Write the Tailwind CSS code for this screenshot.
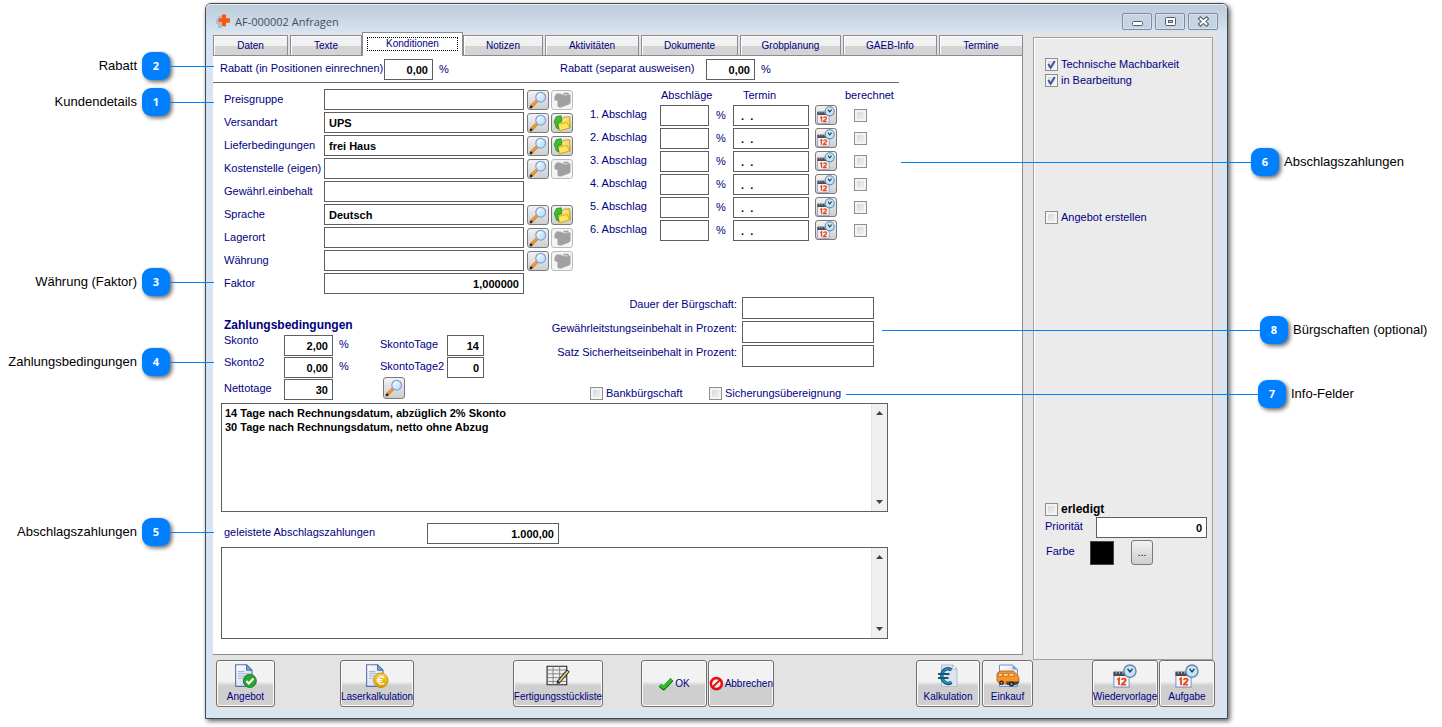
<!DOCTYPE html>
<html lang="de">
<head>
<meta charset="utf-8">
<title>AF-000002 Anfragen</title>
<script src="https://cdn.jsdelivr.net/npm/@tailwindcss/browser@4"></script>
</head>
<body class="relative min-h-screen bg-white font-['Liberation_Sans',Arial,sans-serif] text-[11px] text-[#000080]">

<svg class="absolute h-0 w-0" aria-hidden="true">
  <defs>
    <linearGradient id="gold" x1="0" y1="0" x2="0" y2="1"><stop offset="0" stop-color="#ffd84a"/><stop offset="1" stop-color="#d99a00"/></linearGradient>
    <linearGradient id="folder" x1="0" y1="0" x2="1" y2="1"><stop offset="0" stop-color="#fff7a8"/><stop offset="1" stop-color="#f0c11a"/></linearGradient>
    <linearGradient id="paper" x1="0" y1="0" x2="1" y2="1"><stop offset="0" stop-color="#ffffff"/><stop offset="1" stop-color="#c5d3ee"/></linearGradient>
    <linearGradient id="lens" x1="0" y1="0" x2="1" y2="1"><stop offset="0" stop-color="#f4fbff"/><stop offset="1" stop-color="#a9dcf8"/></linearGradient>
  </defs>
  <symbol id="search" viewBox="0 0 18 18">
    <path d="M2.2 15.600 8 9.800" stroke="#a8641c" stroke-width="3" stroke-linecap="round"/>
    <path d="M2.400 15.200 7.800 9.800" stroke="#f9a12c" stroke-width="2" stroke-linecap="round"/>
    <path d="M1.700 16.300 2.400 15.600" stroke="#222" stroke-width="2.200" stroke-linecap="round"/>
    <circle cx="11.700" cy="6.200" r="4.900" fill="url(#lens)" stroke="#8ba0d6" stroke-width="1.300"/>
    <path d="M9 6a3 3 0 0 1 2.600-2.600" stroke="#fff" stroke-width="1.300" fill="none"/>
  </symbol>
  <symbol id="open" viewBox="0 0 18 18">
    <path d="M6 6 9.500 5l1-1.800 6.300-.4.400 11L6 16.500z" fill="url(#folder)" stroke="#b48a10" stroke-width=".8"/>
    <path d="M4.500 10.500 13.800 8.500 16.800 14 6.500 16.800z" fill="#ffe45c" stroke="#c49a16" stroke-width=".7"/>
    <path d="M8.200 1.800 3.400 2.500 1.200 7.500 3.400 14 6 15 4.500 8.500 8.800 8z" fill="#3fbf30" stroke="#1c8518" stroke-width=".7"/>
  </symbol>
  <symbol id="open-off" viewBox="0 0 18 18">
    <path d="M3.500 2.500H7.500L8.500 3.500H10.500V1.800H15.500V3.500H17.500V12L16 13.500L8 16.500H6L4.500 15V10L1.500 9V5.500Z" fill="#a0a0a0"/>
    <path d="M10.500 3.800h4" stroke="#f2f2f2" stroke-width=".8"/>
  </symbol>
  <symbol id="calendar" viewBox="0 0 22 22">
    <path d="M.8 7.500h14v13.700h-14z" fill="#f4f6fd" stroke="#8c96c4"/>
    <path d="M.5 7h14.500v4H.5z" fill="#4a4a55"/>
    <path d="M3 6v3M6 6v3M9 6v3M12 6v3" stroke="#bbb" stroke-width=".9"/>
    <path d="M4 14.500 5.500 13.300v6M8 14.500c.3-1.600 4-1.600 3.600.4-.2 1.300-3 2.500-3.600 4h4" stroke="#ee4b12" stroke-width="1.700" fill="none"/>
    <circle cx="15.500" cy="6.500" r="5.600" fill="#bfe7f8" stroke="#6b86a8" stroke-width="1.300"/>
    <path d="M13.400 4.500 15.600 7.300 17.800 4.500" stroke="#23344e" stroke-width="1.300" fill="none"/>
  </symbol>
  <symbol id="doc-ok" viewBox="0 0 22 22">
    <path d="M1.500.7h10l5 5v14.800h-15z" fill="url(#paper)" stroke="#5470a8"/>
    <path d="M11.500.7v5h5z" fill="#7fa3da" stroke="#42639c" stroke-width=".8"/>
    <path d="M3.500 7h6M3.500 9h11M3.500 11h11M3.500 13h6" stroke="#aab6cc"/>
    <circle cx="14.500" cy="15.500" r="6" fill="#2da334" stroke="#147a1c" stroke-width=".8"/>
    <path d="m11.400 15.600 2.200 2.300 4.200-4.500" stroke="#fff" stroke-width="2" fill="none"/>
  </symbol>
  <symbol id="doc-euro" viewBox="0 0 22 22">
    <path d="M1.500.7h10l5 5v14.800h-15z" fill="url(#paper)" stroke="#5470a8"/>
    <path d="M11.500.7v5h5z" fill="#7fa3da" stroke="#42639c" stroke-width=".8"/>
    <path d="M3.500 7h6M3.500 9h11M3.500 11h6M3.500 13h4" stroke="#aab6cc"/>
    <circle cx="14.500" cy="15" r="6.600" fill="url(#gold)" stroke="#c88c00" stroke-width=".8"/>
    <path d="M17.500 12.300c-3.600-1.800-5.600.4-5.500 2.800.1 2.500 2.300 4.300 5.500 2.600M10.600 14.300h5M10.600 16h5" stroke="#fff" stroke-width="1.200" fill="none"/>
  </symbol>
  <symbol id="sheet" viewBox="0 0 22 22">
    <path d="M1 2h18v17H1z" fill="#f0f0f0" stroke="#222"/>
    <path d="M1 5.500h18M1 9h18M1 12.500h18M1 16h18M6.500 2v17M12.500 2v17" stroke="#777" stroke-width=".8"/>
    <path d="M11 17 20.500 6" stroke="#333" stroke-width="3.400"/>
    <path d="M12 16 20 6.600" stroke="#e6dc6a" stroke-width="1.600"/>
    <path d="m9.500 18.500 1-3 2 1.700z" fill="#222"/>
  </symbol>
  <symbol id="tick" viewBox="0 0 16 14">
    <path d="M2 8.300 5.600 11.300 14 2.500" stroke="#0b6b0f" stroke-width="4" fill="none" stroke-linejoin="round"/>
    <path d="M2.200 8 5.600 10.700 13.600 2.500" stroke="#2fc02c" stroke-width="2.800" fill="none" stroke-linejoin="round"/>
  </symbol>
  <symbol id="forbid" viewBox="0 0 16 16">
    <circle cx="8.500" cy="8.600" r="6" fill="none" stroke="#999" stroke-width="2.600"/>
    <circle cx="8" cy="8" r="6" fill="#ffffff80" stroke="#f00808" stroke-width="2.600"/>
    <path d="m4 12 8-8" stroke="#f00808" stroke-width="2.200"/>
  </symbol>
  <symbol id="euro" viewBox="0 0 22 24">
    <path d="M4.500 1h11l4.500 4v17.500h-15.500z" fill="#dfe3ee" stroke="#b4bccd"/>
    <path d="M15.500 1v4h4.500z" fill="#fff" stroke="#a4aec2" stroke-width=".7"/>
    <path d="M14.500 5.800C8.600 2.600 4.800 7 4.800 12s4.200 9.400 9.800 6.400" stroke="#135a78" stroke-width="3.400" fill="none"/>
    <path d="M14.500 5.500C9 3 5 7 5 12s4 8.800 9.600 6" stroke="#2b93b5" stroke-width="1.400" fill="none"/>
    <path d="M1 10h11.500M1 14h10.500" stroke="#135a78" stroke-width="2"/>
  </symbol>
  <symbol id="van" viewBox="0 0 24 24">
    <path d="M3.500 1h13l5 4.500v17h-18z" fill="url(#paper)" stroke="#7590c8"/>
    <path d="M16.500 1v4.500h5z" fill="#7fa3da"/>
    <path d="M1 9.500 4 7h13l4.500 4 1.500 3v4l-3 2H4l-3-3z" fill="#fb9420" stroke="#b85c08" stroke-width=".8"/>
    <path d="M2.500 9.500h4V12h-4zM7.500 9.500h4.500V12H7.500zM13 9.500h3.700l2.300 2.500H13z" fill="#ffe5b8" stroke="#9c5a18" stroke-width=".6"/>
    <path d="M10 17.500h13v1.500l-3 2h-9z" fill="#444"/>
    <circle cx="5.500" cy="18.800" r="2.300" fill="#222"/><circle cx="15.500" cy="20" r="2.500" fill="#222"/>
    <circle cx="5.500" cy="18.800" r=".9" fill="#bbb"/><circle cx="15.500" cy="20" r="1" fill="#bbb"/>
  </symbol>
  <symbol id="check" viewBox="0 0 13 13">
    <path d="m3.300 6 2.300 3.800L9.800 3" stroke="#42559a" stroke-width="2" fill="none"/>
  </symbol>
</svg>

<div class="flex min-h-screen pt-[3px] pr-[214px] pb-[8px] pl-[205px]">
  <main class="flex min-w-0 flex-1 flex-col rounded-t-[6px] border border-[#45484c] bg-[#d7e4f1] pr-[8px] pb-[7px] pl-[7px] shadow-[2px_2px_5px_rgba(0,0,0,0.65)]">

    <header class="-mr-[8px] -ml-[7px] flex h-[29px] items-start rounded-t-[5px] bg-linear-to-b from-[#bccad9] to-[#d7e4f1] pr-[9px] pl-[10px] shadow-[inset_0_1px_0_#e6edf4]">
      <svg class="mt-[9px] h-4 w-4" viewBox="0 0 16 16" aria-hidden="true"><path d="M2 3h4v3h4v5H6v4H2v-4H0V6h2z" fill="#b9bcc2"/><path d="M6 1.500h4V5l4 .5v4l-4 .5v3.500l-4-.5V9H2.500V5.500L6 5z" fill="#f05a1e"/></svg>
      <h1 class="mt-[10px] ml-[3px] flex-1 font-['Open_Sans',sans-serif] text-[11px] leading-4 text-[#454f5c]">AF-000002 Anfragen</h1>
      <div class="mt-[9px] flex gap-[3px] [&_button]:flex [&_button]:h-[17px] [&_button]:w-[30px] [&_button]:items-center [&_button]:justify-center [&_button]:rounded-[2px] [&_button]:border [&_button]:border-[#7d8ca3] [&_button]:bg-[#c6d3e2] [&_button]:shadow-[inset_0_0_0_1px_#d8e2ed]">
        <button aria-label="Minimieren"><svg class="h-[11px] w-[11px]" viewBox="0 0 11 11"><rect x=".5" y="5.500" width="10" height="4" rx="1" fill="#fff" stroke="#505a66"/></svg></button>
        <button aria-label="Maximieren"><svg class="h-[11px] w-[11px]" viewBox="0 0 11 11"><rect x=".5" y="1.500" width="10" height="8" rx="1" fill="#fff" stroke="#505a66"/><rect x="3.500" y="4.500" width="4" height="2" fill="#c6d3e2" stroke="#505a66"/></svg></button>
        <button aria-label="Schließen"><svg class="h-[11px] w-[11px]" viewBox="0 0 11 11"><path d="m1 1.500 9 8M10 1.500l-9 8" stroke="#505a66" stroke-width="4"/><path d="m1.800 2.200 7.400 6.600M9.200 2.200 1.800 8.800" stroke="#fff" stroke-width="2"/></svg></button>
      </div>
    </header>

    <div class="flex flex-1 flex-col bg-[#e3e3e3]">
      <div class="flex flex-1">

        <div class="flex min-w-0 flex-1 flex-col pb-[5px]">
          <div role="tablist" class="flex h-[23px] items-end gap-[2px] border-b border-[#8b8b95] text-[10px] [&_button]:h-[20px] [&_button]:border [&_button]:border-b-0 [&_button]:border-[#8b8b95] [&_button]:bg-linear-to-b [&_button]:from-[#f1f1f1] [&_button]:from-50% [&_button]:to-[#d4d4d4] [&_button]:to-55% [&_button]:shadow-[inset_1px_1px_0_#fff]">
            <button role="tab" class="w-[75px]">Daten</button>
            <button role="tab" class="w-[72px]">Texte</button>
            <div class="-mx-[2px] -mb-px flex h-[24px] w-[101px] border border-b-0 border-[#8b8b95] bg-white px-[4px] pt-[4px]">
              <span role="tab" aria-selected="true" tabindex="0" class="h-[14px] flex-1 border border-dotted border-black text-center leading-[12px]">Konditionen</span>
            </div>
            <button role="tab" class="w-[80px]">Notizen</button>
            <button role="tab" class="w-[94px]">Aktivitäten</button>
            <button role="tab" class="w-[97px]">Dokumente</button>
            <button role="tab" class="w-[101px]">Grobplanung</button>
            <button role="tab" class="w-[94px]">GAEB-Info</button>
            <button role="tab" class="flex-1">Termine</button>
          </div>

          <section class="flex-1 border-r border-b border-[#8b8b95] bg-white [&_input:not([type=checkbox])]:h-[21px] [&_input:not([type=checkbox])]:border [&_input:not([type=checkbox])]:border-[#5f5f5f] [&_input:not([type=checkbox])]:px-[4px] [&_input:not([type=checkbox])]:font-bold [&_input:not([type=checkbox])]:text-black [&_button]:flex [&_button]:h-[20px] [&_button]:w-[22px] [&_button]:items-center [&_button]:justify-center [&_button]:rounded-[3px] [&_button]:border [&_button]:border-[#7a7a7a] [&_button]:bg-linear-to-b [&_button]:from-[#f2f2f2] [&_button]:to-[#cecece] [&_button:disabled]:border-[#b8bcbf] [&_button:disabled]:bg-none [&_button:disabled]:bg-[#f4f4f4] [&_button_svg]:h-[18px] [&_button_svg]:w-[18px] [&_input[type=checkbox]]:h-[13px] [&_input[type=checkbox]]:w-[13px] [&_input[type=checkbox]]:appearance-none [&_input[type=checkbox]]:border [&_input[type=checkbox]]:border-[#8e8f8f] [&_input[type=checkbox]]:bg-linear-to-br [&_input[type=checkbox]]:from-[#cfd2d8] [&_input[type=checkbox]]:to-[#f6f6f6] [&_input[type=checkbox]]:shadow-[inset_0_0_0_2px_#f4f4f4]">

            <div class="flex h-[27px] w-[686px] items-start border-b border-[#6a6a6a] pt-[3px] pl-[7px]">
              <label for="rab1" class="w-[164px] leading-[18px]">Rabatt (in Positionen einrechnen)</label>
              <input id="rab1" value="0,00" class="w-[49px] text-right">
              <span class="w-[127px] pl-[6px] leading-[20px]">%</span>
              <label for="rab2" class="w-[146px] leading-[18px]">Rabatt (separat ausweisen)</label>
              <input id="rab2" value="0,00" class="w-[49px] text-right">
              <span class="pl-[6px] leading-[20px]">%</span>
            </div>

            <div class="flex pl-[11px]">
              <div class="flex w-[366px] flex-col gap-[2px] pt-[6px] [&>div]:flex [&>div]:items-center [&>div]:gap-[2px] [&_label]:w-[98px] [&_label]:whitespace-nowrap [&_input]:mr-px [&_input]:w-[200px] [&_input:not([type=checkbox])]:px-[3px]">
                <div><label for="f1">Preisgruppe</label><input id="f1"><button aria-label="Suchen"><svg><use href="#search"/></svg></button><button disabled aria-label="Öffnen"><svg><use href="#open-off"/></svg></button></div>
                <div><label for="f2">Versandart</label><input id="f2" value="UPS"><button aria-label="Suchen"><svg><use href="#search"/></svg></button><button aria-label="Öffnen"><svg><use href="#open"/></svg></button></div>
                <div><label for="f3">Lieferbedingungen</label><input id="f3" value="frei Haus"><button aria-label="Suchen"><svg><use href="#search"/></svg></button><button aria-label="Öffnen"><svg><use href="#open"/></svg></button></div>
                <div><label for="f4">Kostenstelle (eigen)</label><input id="f4"><button aria-label="Suchen"><svg><use href="#search"/></svg></button><button disabled aria-label="Öffnen"><svg><use href="#open-off"/></svg></button></div>
                <div><label for="f5">Gewährl.einbehalt</label><input id="f5"></div>
                <div><label for="f6">Sprache</label><input id="f6" value="Deutsch"><button aria-label="Suchen"><svg><use href="#search"/></svg></button><button aria-label="Öffnen"><svg><use href="#open"/></svg></button></div>
                <div><label for="f7">Lagerort</label><input id="f7"><button aria-label="Suchen"><svg><use href="#search"/></svg></button><button disabled aria-label="Öffnen"><svg><use href="#open-off"/></svg></button></div>
                <div><label for="f8">Währung</label><input id="f8"><button aria-label="Suchen"><svg><use href="#search"/></svg></button><button disabled aria-label="Öffnen"><svg><use href="#open-off"/></svg></button></div>
                <div><label for="f9">Faktor</label><input id="f9" value="1,000000" class="text-right"></div>
              </div>

              <div class="flex flex-col gap-[2px] pt-[4px] [&_label]:w-[70px] [&_label]:leading-[18px] [&>div+div]:flex [&>div+div]:h-[21px] [&_span.pct]:w-[24px] [&_span.pct]:text-center [&_span.pct]:leading-[20px] [&_button]:mr-[17px] [&_button]:ml-[6px] [&_input[type=checkbox]]:mt-[4px]">
                <div class="flex h-[16px] pl-[71px] leading-[16px]"><span class="w-[82px]">Abschläge</span><span class="w-[102px]">Termin</span><span>berechnet</span></div>
                <div><label for="a1">1. Abschlag</label><input id="a1" class="w-[49px]"><span class="pct">%</span><input aria-label="Termin 1" value=" .  ." class="w-[76px]"><button aria-label="Kalender"><svg><use href="#calendar"/></svg></button><input type="checkbox" aria-label="berechnet 1"></div>
                <div><label for="a2">2. Abschlag</label><input id="a2" class="w-[49px]"><span class="pct">%</span><input aria-label="Termin 2" value=" .  ." class="w-[76px]"><button aria-label="Kalender"><svg><use href="#calendar"/></svg></button><input type="checkbox" aria-label="berechnet 2"></div>
                <div><label for="a3">3. Abschlag</label><input id="a3" class="w-[49px]"><span class="pct">%</span><input aria-label="Termin 3" value=" .  ." class="w-[76px]"><button aria-label="Kalender"><svg><use href="#calendar"/></svg></button><input type="checkbox" aria-label="berechnet 3"></div>
                <div><label for="a4">4. Abschlag</label><input id="a4" class="w-[49px]"><span class="pct">%</span><input aria-label="Termin 4" value=" .  ." class="w-[76px]"><button aria-label="Kalender"><svg><use href="#calendar"/></svg></button><input type="checkbox" aria-label="berechnet 4"></div>
                <div><label for="a5">5. Abschlag</label><input id="a5" class="w-[49px]"><span class="pct">%</span><input aria-label="Termin 5" value=" .  ." class="w-[76px]"><button aria-label="Kalender"><svg><use href="#calendar"/></svg></button><input type="checkbox" aria-label="berechnet 5"></div>
                <div><label for="a6">6. Abschlag</label><input id="a6" class="w-[49px]"><span class="pct">%</span><input aria-label="Termin 6" value=" .  ." class="w-[76px]"><button aria-label="Kalender"><svg><use href="#calendar"/></svg></button><input type="checkbox" aria-label="berechnet 6"></div>
              </div>
            </div>

            <div class="flex pt-[3px] pb-[3px] pl-[11px]">
              <div class="w-[326px] pt-[20px]">
                <h2 class="h-[18px] text-[12px] leading-[16px] font-bold">Zahlungsbedingungen</h2>
                <div class="grid grid-cols-[60px_49px_47px_67px_37px] gap-y-px text-[11px] leading-[18px] [&>span]:pl-[6px] [&_input]:w-full [&_input]:text-right">
                  <label for="z1" class="leading-[10px]">Skonto</label><input id="z1" value="2,00"><span>%</span><label for="z2">SkontoTage</label><input id="z2" value="14">
                  <label for="z3" class="leading-[10px]">Skonto2</label><input id="z3" value="0,00"><span>%</span><label for="z4">SkontoTage2</label><input id="z4" value="0">
                  <label for="z5">Nettotage</label><input id="z5" value="30"><span></span><div class="h-[21px] pl-[3px] [&_button]:-mt-[2px] [&_button]:h-[22px]"><button aria-label="Zahlungsbedingung suchen"><svg><use href="#search"/></svg></button></div>
                </div>
              </div>
              <div class="flex flex-col gap-[2px] [&>div]:flex [&>div]:gap-[5px] [&_label.b]:w-[187px] [&_label.b]:text-right [&_label.b]:leading-[15px]">
                <div><label class="b" for="b1">Dauer der Bürgschaft:</label><input id="b1" class="h-[22px]! w-[132px]"></div>
                <div><label class="b" for="b2">Gewährleitstungseinbehalt in Prozent:</label><input id="b2" class="h-[22px]! w-[132px]"></div>
                <div><label class="b" for="b3">Satz Sicherheitseinbehalt in Prozent:</label><input id="b3" class="h-[22px]! w-[132px]"></div>
                <div class="mt-[18px] pl-[40px] leading-[13px]">
                  <label class="flex w-[114px] gap-[3px]"><input type="checkbox">Bankbürgschaft</label>
                  <label class="flex gap-[3px]"><input type="checkbox">Sicherungsübereignung</label>
                </div>
              </div>
            </div>

            <div class="ml-[8px] flex h-[109px] w-[667px] border border-[#5f5f5f]">
              <textarea aria-label="Zahlungstext" class="flex-1 resize-none overflow-hidden px-[3px] pt-[2px] leading-[14px] font-bold text-black">14 Tage nach Rechnungsdatum, abzüglich 2% Skonto
30 Tage nach Rechnungsdatum, netto ohne Abzug</textarea>
              <div class="flex w-[16px] flex-col items-center justify-between border-l border-[#e3e3e3] bg-[#f0f0f0] py-[7px]">
                <svg class="h-[4px] w-[7px]" viewBox="0 0 7 4"><path d="M0 4 3.500 0 7 4z" fill="#444"/></svg>
                <svg class="h-[4px] w-[7px]" viewBox="0 0 7 4"><path d="M0 0h7L3.500 4z" fill="#444"/></svg>
              </div>
            </div>

            <div class="flex pt-[11px] pb-[3px] pl-[11px]">
              <label for="gel" class="w-[203px] leading-[19px]">geleistete Abschlagszahlungen</label>
              <input id="gel" value="1.000,00" class="w-[132px] text-right">
            </div>

            <div class="ml-[8px] flex h-[92px] w-[667px] border border-[#5f5f5f]">
              <textarea aria-label="Abschlagszahlungen" class="flex-1 resize-none overflow-hidden px-[3px] pt-[2px] leading-[14px] font-bold text-black"></textarea>
              <div class="flex w-[16px] flex-col items-center justify-between border-l border-[#e3e3e3] bg-[#f0f0f0] py-[7px]">
                <svg class="h-[4px] w-[7px]" viewBox="0 0 7 4"><path d="M0 4 3.500 0 7 4z" fill="#444"/></svg>
                <svg class="h-[4px] w-[7px]" viewBox="0 0 7 4"><path d="M0 0h7L3.500 4z" fill="#444"/></svg>
              </div>
            </div>
          </section>
        </div>

        <aside class="mt-[4px] mr-[6px] ml-[10px] flex w-[180px] flex-col border border-[#a0a0a0] bg-[#ebebeb] pt-[18px] pl-[11px] shadow-[inset_1px_1px_0_#fff] [&_label.c]:flex [&_label.c]:h-[16px] [&_label.c]:items-center [&_label.c]:gap-[3px] [&_input[type=checkbox]]:h-[13px] [&_input[type=checkbox]]:w-[13px] [&_input[type=checkbox]]:appearance-none [&_input[type=checkbox]]:border [&_input[type=checkbox]]:border-[#8e8f8f] [&_input[type=checkbox]]:bg-linear-to-br [&_input[type=checkbox]]:from-[#cfd2d8] [&_input[type=checkbox]]:to-[#f6f6f6] [&_input[type=checkbox]]:shadow-[inset_0_0_0_2px_#f4f4f4]">
          <label class="c"><span class="relative flex"><input type="checkbox" checked class="peer"><svg class="pointer-events-none absolute inset-0 hidden h-[13px] w-[13px] peer-checked:block"><use href="#check"/></svg></span>Technische Machbarkeit</label>
          <label class="c"><span class="relative flex"><input type="checkbox" checked class="peer"><svg class="pointer-events-none absolute inset-0 hidden h-[13px] w-[13px] peer-checked:block"><use href="#check"/></svg></span>in Bearbeitung</label>
          <label class="c mt-[121px]"><input type="checkbox">Angebot erstellen</label>
          <label class="c mt-[276px] text-[12px] font-bold text-black"><input type="checkbox">erledigt</label>
          <div class="flex"><label for="prio" class="w-[51px] leading-[19px]">Priorität</label><input id="prio" value="0" class="h-[21px] w-[111px] border border-[#5f5f5f] bg-white px-[4px] text-right font-bold text-black"></div>
          <div class="mt-[2px] flex items-start"><label for="color" class="w-[45px] pl-px leading-[22px]">Farbe</label><span class="mt-px h-[24px] w-[24px] border border-[#444] bg-black"></span><button id="color" class="ml-[17px] h-[25px] w-[22px] rounded-[3px] border border-[#7a7a7a] bg-linear-to-b from-[#f2f2f2] to-[#cecece]">...</button></div>
        </aside>
      </div>

      <footer class="flex pr-[4px] pb-[4px] pl-[3px] text-[10px] [&_button]:flex [&_button]:h-[47px] [&_button]:flex-col [&_button]:items-center [&_button]:justify-center [&_button]:gap-[1px] [&_button]:rounded-[3px] [&_button]:border [&_button]:border-[#707070] [&_button]:bg-linear-to-b [&_button]:from-[#f2f2f2] [&_button]:from-45% [&_button]:to-[#cfcfcf] [&_button]:to-55% [&_button]:whitespace-nowrap [&_button]:shadow-[inset_0_0_0_1px_#fafafa] [&_svg.i]:h-[24px] [&_svg.i]:w-[24px]">
        <button class="w-[59px]"><svg class="i"><use href="#doc-ok"/></svg>Angebot</button>
        <button class="ml-[65px] w-[74px]"><svg class="i"><use href="#doc-euro"/></svg>Laserkalkulation</button>
        <button class="ml-[99px] w-[90px]"><svg class="i"><use href="#sheet"/></svg>Fertigungsstückliste</button>
        <button class="ml-[38px] w-[66px] flex-row!"><svg class="h-[14px] w-[16px]"><use href="#tick"/></svg>OK</button>
        <button class="ml-[1px] w-[66px] flex-row!"><svg class="h-[15px] w-[15px]"><use href="#forbid"/></svg>Abbrechen</button>
        <button class="ml-auto w-[64px]"><svg class="i"><use href="#euro"/></svg>Kalkulation</button>
        <button class="ml-[2px] w-[51px]"><svg class="i"><use href="#van"/></svg>Einkauf</button>
        <button class="ml-[59px] w-[66px]"><svg class="i"><use href="#calendar"/></svg>Wiedervorlage</button>
        <button class="ml-[1px] w-[56px]"><svg class="i"><use href="#calendar"/></svg>Aufgabe</button>
      </footer>
    </div>
  </main>
</div>

<!-- Numbered callouts laid over the window -->
<div class="pointer-events-none text-[13px] text-black [&>div]:absolute [&>div]:flex [&>div]:h-[28px] [&>div]:items-center [&_b]:flex [&_b]:h-[28px] [&_b]:w-[28px] [&_b]:shrink-0 [&_b]:items-center [&_b]:justify-center [&_b]:rounded-[9px] [&_b]:bg-[#0080ff] [&_b]:font-['Open_Sans',sans-serif] [&_b]:text-[11px] [&_b]:text-white [&_b]:shadow-[2px_2px_4px_rgba(0,0,0,0.6)] [&_i]:h-px [&_i]:bg-[#0080ff]">
  <div class="top-[52px] left-0 w-[214px]"><span class="w-[137px] text-right">Rabatt</span><b class="ml-[5px]">2</b><i class="flex-1"></i></div>
  <div class="top-[88px] left-0 w-[214px]"><span class="w-[137px] text-right">Kundendetails</span><b class="ml-[5px]">1</b><i class="flex-1"></i></div>
  <div class="top-[268px] left-0 w-[214px]"><span class="w-[137px] text-right">Währung (Faktor)</span><b class="ml-[5px]">3</b><i class="flex-1"></i></div>
  <div class="top-[348px] left-0 w-[214px]"><span class="w-[137px] text-right">Zahlungsbedingungen</span><b class="ml-[5px]">4</b><i class="flex-1"></i></div>
  <div class="top-[518px] left-0 w-[214px]"><span class="w-[137px] text-right">Abschlagszahlungen</span><b class="ml-[5px]">5</b><i class="flex-1"></i></div>
  <div class="top-[148px] left-[901px]"><i class="w-[350px]"></i><b class="mr-[5px]">6</b><span>Abschlagszahlungen</span></div>
  <div class="top-[316px] left-[882px]"><i class="w-[378px]"></i><b class="mr-[5px]">8</b><span class="whitespace-nowrap">Bürgschaften (optional)</span></div>
  <div class="top-[380px] left-[846px]"><i class="w-[412px]"></i><b class="mr-[5px]">7</b><span>Info-Felder</span></div>
</div>
</body>
</html>
